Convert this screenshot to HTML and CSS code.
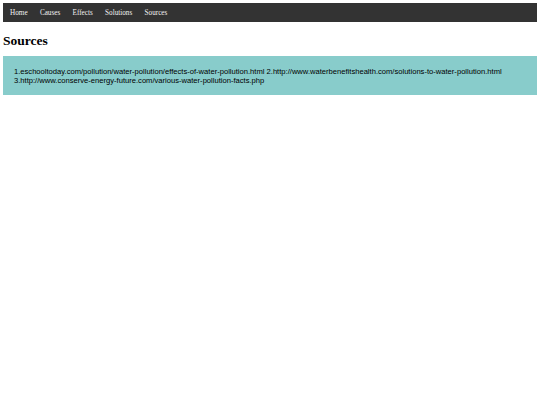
FILE: index.html
```html
<!DOCTYPE html>
<html>
<head>
<meta charset="utf-8">
<link rel="stylesheet" href="styles.css">
</head>
<body>
<nav class="topnav">
  <a href="#">Home</a>
  <a href="#">Causes</a>
  <a href="#">Effects</a>
  <a href="#">Solutions</a>
  <a href="#">Sources</a>
</nav>
<h1 class="title">Sources</h1>
<div class="sources">
  <p>1.eschooltoday.com/pollution/water-pollution/effects-of-water-pollution.html 2.http://www.waterbenefitshealth.com/solutions-to-water-pollution.html 3.http://www.conserve-energy-future.com/various-water-pollution-facts.php</p>
</div>
</body>
</html>
```
FILE: styles.css
```css
body {
  margin: 3px;
  font-family: "Liberation Serif", serif;
  background: #fff;
}
.topnav {
  background: #333333;
  height: 19px;
  display: flex;
  align-items: center;
  padding-left: 7px;
}
.topnav a {
  color: #f2f2f2;
  text-decoration: none;
  font-size: 7.2px;
  margin-right: 12.3px;
}
.title {
  font-size: 13.5px;
  font-weight: bold;
  line-height: 16px;
  margin: 10.5px 0 7.6px 0;
}
.sources {
  background: #88cccb;
  padding: 11px 11px 10px 11px;
}
.sources p {
  margin: 0;
  font-family: "Liberation Sans", Arial, sans-serif;
  font-size: 7.6px;
  line-height: 9px;
  color: #000;
}
```
